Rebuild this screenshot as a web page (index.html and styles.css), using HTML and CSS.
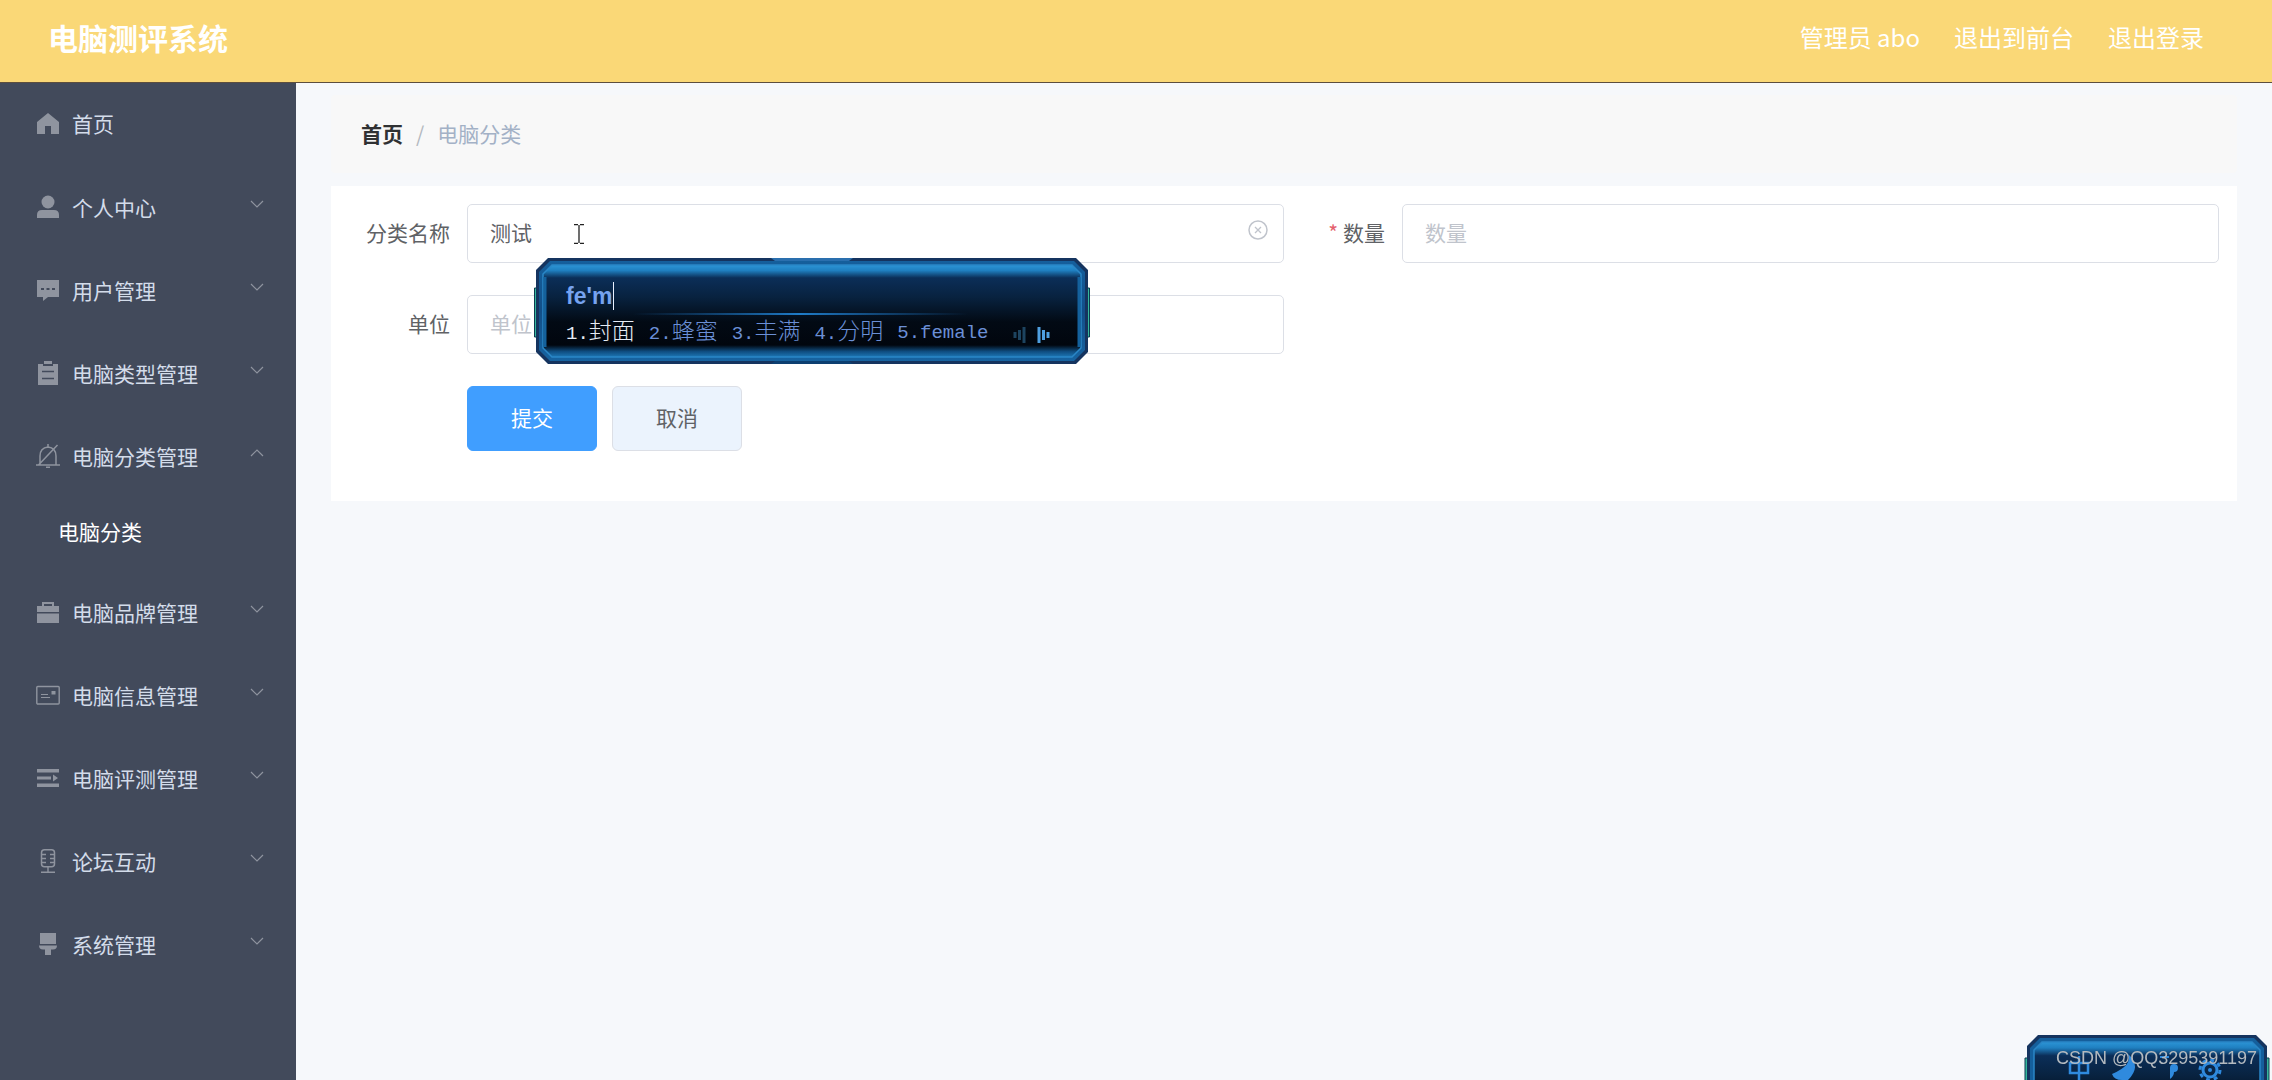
FILE: index.html
```html
<!DOCTYPE html>
<html lang="zh-CN">
<head>
<meta charset="utf-8">
<title>电脑测评系统</title>
<link rel="stylesheet" href="styles.css">
</head>
<body>
<svg class="defs" aria-hidden="true">
  <symbol id="chevron" viewBox="0 0 14 8"><path d="M1 1l6 6 6-6" fill="none" stroke="currentColor" stroke-width="1.2"/></symbol>
</svg>

<header class="topbar">
  <h1 class="brand">电脑测评系统</h1>
  <nav class="account">
    <span>管理员 abo</span>
    <a href="#front">退出到前台</a>
    <a href="#logout">退出登录</a>
  </nav>
</header>

<div class="layout">
  <nav class="sidebar">
    <ul class="menu">
      <li><a class="item home" href="#home">
        <svg class="icon" viewBox="0 0 24 24"><path d="M12 2L1 11v12h8v-8h6v8h8V11z" fill="currentColor"/></svg>
        <span>首页</span></a></li>
      <li><a class="item" href="#me">
        <svg class="icon" viewBox="0 0 24 24"><circle cx="12" cy="7" r="6.5" fill="currentColor"/><path d="M1 23v-3q0-5 5-5h12q5 0 5 5v3z" fill="currentColor"/></svg>
        <span>个人中心</span><svg class="arrow"><use href="#chevron"/></svg></a></li>
      <li><a class="item" href="#users">
        <svg class="icon" viewBox="0 0 24 24"><path d="M1 2h22v17H12l-5 4v-4H1z" fill="currentColor"/><path d="M5 10h3v2H5zM10.500 10h3v2h-3zM16 10h3v2h-3z" fill="#424a5b"/></svg>
        <span>用户管理</span><svg class="arrow"><use href="#chevron"/></svg></a></li>
      <li><a class="item" href="#types">
        <svg class="icon" viewBox="0 0 24 24"><path d="M2 3h5v2h10V3h5v21H2zM8 0h8v3H8z" fill="currentColor"/><path d="M6 10.500h12M6 17.500h12" stroke="#424a5b" stroke-width="1.300"/></svg>
        <span>电脑类型管理</span><svg class="arrow"><use href="#chevron"/></svg></a></li>
      <li>
        <a class="item" href="#categories">
        <svg class="icon" viewBox="0 0 24 24"><path d="M4 21v-9q0-8 8-9 8 1 8 9v9M0 21h24M12 0v3M10 23.300h4M2.500 21L21.500 1" fill="none" stroke="currentColor" stroke-width="1.500"/></svg>
        <span>电脑分类管理</span><svg class="arrow up"><use href="#chevron"/></svg></a>
        <a class="subitem" href="#category-list">电脑分类</a>
      </li>
      <li><a class="item" href="#brands">
        <svg class="icon" viewBox="0 0 24 24"><path d="M1 6h5V2h12v4h5v6H1zM8 4v2h8V4zM1 13.500h22V23H1z" fill="currentColor" fill-rule="evenodd"/></svg>
        <span>电脑品牌管理</span><svg class="arrow"><use href="#chevron"/></svg></a></li>
      <li><a class="item" href="#info">
        <svg class="icon" viewBox="0 0 24 24"><rect x=".8" y="3.500" width="22.400" height="17.500" rx="1" fill="none" stroke="currentColor" stroke-width="1.400"/><path d="M5 11.500h7M5 14.500h9" stroke="currentColor" stroke-width="1.200"/><path d="M15.500 8h4v3.500h-4z" fill="currentColor"/></svg>
        <span>电脑信息管理</span><svg class="arrow"><use href="#chevron"/></svg></a></li>
      <li><a class="item" href="#reviews">
        <svg class="icon" viewBox="0 0 24 24"><path d="M1 3h22v3.500H1zM1 17.500h22V21H1zM1 10.500h14v3H1zM17 8.500l5 3.500-5 3.500z" fill="currentColor"/></svg>
        <span>电脑评测管理</span><svg class="arrow"><use href="#chevron"/></svg></a></li>
      <li><a class="item" href="#forum">
        <svg class="icon" viewBox="0 0 24 24"><rect x="5.500" y=".8" width="13" height="17" rx="3" fill="none" stroke="currentColor" stroke-width="1.500"/><path d="M6 5.500h4M6 9.500h4M6 13.500h4M14 5.500h4M14 9.500h4M14 13.500h4M12 18v5M5 23.200h14" stroke="currentColor" stroke-width="1.400"/></svg>
        <span>论坛互动</span><svg class="arrow"><use href="#chevron"/></svg></a></li>
      <li><a class="item" href="#system">
        <svg class="icon" viewBox="0 0 24 24"><path d="M4 1h16v11H4zM3 13.500h18q0 4-4 4h-2V23H9v-5.500H7q-4 0-4-4z" fill="currentColor"/></svg>
        <span>系统管理</span><svg class="arrow"><use href="#chevron"/></svg></a></li>
    </ul>
  </nav>

  <main class="content">
    <nav class="breadcrumb">
      <a href="#home">首页</a><span class="slash">/</span><span class="current">电脑分类</span>
    </nav>

    <form class="panel">
      <div class="field">
        <label for="name">分类名称</label>
        <div class="control">
          <input id="name" type="text" value="测试">
          <button class="clear" type="button" aria-label="清空">
            <svg viewBox="0 0 20 20"><circle cx="10" cy="10" r="9" fill="none" stroke="currentColor" stroke-width="1.500"/><path d="M7 7l6 6M13 7l-6 6" stroke="currentColor" stroke-width="1.300"/></svg>
          </button>
        </div>
      </div>
      <div class="field">
        <label for="amount" class="required">数量</label>
        <div class="control"><input id="amount" type="text" placeholder="数量"></div>
      </div>
      <div class="field">
        <label for="unit">单位</label>
        <div class="control"><input id="unit" type="text" placeholder="单位"></div>
      </div>
      <div class="actions">
        <button class="btn primary" type="button">提交</button>
        <button class="btn" type="button">取消</button>
      </div>
    </form>
  </main>
</div>

<svg class="pointer" viewBox="0 0 10 20"><path d="M0 .5h4M6 .5h4M0 19.500h4M6 19.500h4M5 1v18" stroke="#222" stroke-width="1.300"/></svg>

<div class="ime">
  <svg class="frame" viewBox="0 0 556 108">
    <defs>
      <linearGradient id="rim" x2="0" y2="1"><stop offset="0" stop-color="#155f9c"/><stop offset=".5" stop-color="#124f88"/><stop offset="1" stop-color="#1763a0"/></linearGradient>
      <linearGradient id="glass" x2="0" y2="1"><stop offset="0" stop-color="#2c95d6"/><stop offset=".06" stop-color="#1f7fc0"/><stop offset=".14" stop-color="#0b2e58"/><stop offset=".35" stop-color="#08223f"/><stop offset=".62" stop-color="#020a14"/><stop offset=".87" stop-color="#01060e"/><stop offset=".94" stop-color="#0f4d80"/><stop offset="1" stop-color="#1d76b4"/></linearGradient>
      <linearGradient id="beam"><stop offset="0" stop-color="#1a6cb8" stop-opacity="0"/><stop offset=".5" stop-color="#1f7cc8"/><stop offset="1" stop-color="#1a6cb8" stop-opacity="0"/></linearGradient>
    </defs>
    <path d="M.5 31h4v49h-4zM551.500 31h4v49h-4z" fill="#35b79c" stroke="#0b3c50"/>
    <path d="M14 1h528l12 12v82l-12 12H14L2 95V13z" fill="#15345f"/>
    <path d="M16 4h524l11 11v78l-11 11H16L5 93V15z" fill="url(#rim)"/>
    <path d="M18 8h520l9 9v74l-9 9H18l-9-9V17z" fill="url(#glass)" stroke="#2a86c6" stroke-width="1.500"/>
    <path d="M11 20v70M545 20v70" stroke="#14619c" stroke-width="3"/>
    <path d="M237 1h82l-4 3h-74z" fill="#2a6fae"/><path d="M237 107h82l-4-3h-74z" fill="#0d3f70"/>
    <rect x="99" y="56" width="335" height="2" fill="url(#beam)"/>
    <path d="M481 75v6M485.500 73v10M490 70v16" stroke="#1d4460" stroke-width="3"/>
    <path d="M505 70v16M509.500 73v10M514 75v6" stroke="#4f9fe0" stroke-width="3"/>
  </svg>
  <div class="typed">fe'm</div>
  <ol class="candidates">
    <li class="first">1.<span>封面</span></li><li>2.<span>蜂蜜</span></li><li>3.<span>丰满</span></li><li>4.<span>分明</span></li><li>5.female</li>
  </ol>
</div>

<div class="imebar">
  <svg class="frame" viewBox="0 0 246 46">
    <path d="M1 24h4v30H1zM241 24h4v30h-4z" fill="#35b79c" stroke="#0b3c50"/>
    <path d="M14 1h218l11 11v50H3V12z" fill="#15345f"/>
    <path d="M16 4h214l10 10v50H6V14z" fill="#155f9c"/>
    <path d="M18 8h210l8 8v90H10V16z" fill="url(#glass)" stroke="#2a86c6" stroke-width="1.500"/>
    <path d="M46 29h18v10H46zM55 22v24" fill="none" stroke="#2f8ade" stroke-width="2.500"/>
    <path d="M104 20Q109 31 88 40Q90 46 98 46H104Q118 32 104 20z" fill="#2f8ade"/>
    <path d="M136 22h9v2h-9zM146 34a4 4 0 1 1 4 4q0 4-4 7" fill="#2f8ade"/>
    <circle cx="186" cy="36" r="7" fill="none" stroke="#2f8ade" stroke-width="3"/><circle cx="186" cy="36" r="10" fill="none" stroke="#2f8ade" stroke-width="3" stroke-dasharray="3.900 3.950"/><circle cx="186" cy="36" r="2" fill="#2f8ade"/>
  </svg>
  <span class="credit">CSDN @QQ3295391197</span>
</div>
</body>
</html>
```

FILE: styles.css
```css
* {
  box-sizing: border-box;
}

body {
  margin: 0;
  min-height: 100vh;
  display: flex;
  flex-direction: column;
  position: relative;
  overflow-x: hidden;
  background: #f6f8fb;
  color: #606266;
  font-family: "Noto Sans CJK SC", "Noto Sans", sans-serif;
  font-size: 21px;
  line-height: 30px;
}

a {
  color: inherit;
  text-decoration: none;
}

ul,
ol {
  margin: 0;
  padding: 0;
  list-style: none;
}

input,
button {
  font: inherit;
}

.defs {
  position: absolute;
  width: 0;
  height: 0;
}

/* Top bar */
.topbar {
  display: flex;
  align-items: center;
  justify-content: space-between;
  height: 83px;
  padding: 0 68px 8px 48px;
  background: #fad877;
  border-bottom: 1px solid #5c4e3e;
  color: #fff;
}

.brand {
  margin: 0;
  font-size: 30px;
  font-weight: 700;
}

.account {
  display: flex;
  gap: 34px;
  font-size: 24px;
}

.layout {
  flex: 1;
  display: flex;
}

/* Side menu */
.sidebar {
  flex: none;
  width: 296px;
  background: #424a5b;
  color: #d3dcea;
}

.item {
  display: flex;
  align-items: center;
  height: 83px;
  padding: 0 32px 6px 36px;
}

.item.home {
  height: 85px;
}

.icon {
  width: 24px;
  height: 24px;
  margin-right: 12px;
  color: #8f949f;
}

.arrow {
  width: 14px;
  height: 8px;
  margin-left: auto;
  margin-bottom: 6px;
  color: #8f949f;
}

.arrow.up {
  transform: rotate(180deg);
}

.subitem {
  display: block;
  height: 73px;
  padding: 16px 0 0 58px;
  color: #fff;
}

/* Content */
.content {
  flex: 1;
  min-width: 0;
  padding: 12px 35px;
}

.breadcrumb {
  display: flex;
  align-items: center;
  height: 78px;
  margin-bottom: 13px;
  padding: 0 30px 2px;
  background: #f8f8f8;
  border-radius: 4px;
}

.breadcrumb a {
  color: #303133;
  font-weight: 700;
}

.slash {
  margin: 0 13px;
  color: #b4b8c0;
}

.current {
  color: #a3b1c6;
}

.panel {
  display: grid;
  grid-template-columns: 1fr 1fr;
  row-gap: 32px;
  padding: 18px 18px 50px;
  background: #fff;
}

.field {
  display: flex;
  align-items: center;
}

.field label {
  flex: none;
  width: 118px;
  padding: 0 17px 3px 0;
  text-align: right;
}

.required::before {
  content: "*";
  margin-right: 5px;
  color: #e4606d;
}

.control {
  flex: 1;
  position: relative;
}

.control input {
  display: block;
  width: 100%;
  height: 59px;
  padding: 0 22px 4px;
  border: 1px solid #dcdfe6;
  border-radius: 5px;
  background: #fff;
  color: #606266;
  outline: none;
}

.control input::placeholder {
  color: #c0c4cc;
  opacity: 1;
}

.clear {
  position: absolute;
  top: 16px;
  right: 16px;
  width: 20px;
  height: 20px;
  padding: 0;
  border: 0;
  background: none;
  color: #c0c4cc;
}

.clear svg {
  display: block;
}

.actions {
  grid-column: 1 / -1;
  display: flex;
  gap: 15px;
  padding-left: 118px;
}

.btn {
  width: 130px;
  height: 65px;
  padding: 0 0 3px;
  border: 1px solid #dcdfe6;
  border-radius: 6px;
  background: #ebf3fd;
  color: #606266;
}

.btn.primary {
  border-color: #409eff;
  background: #409eff;
  color: #fff;
}

/* Mouse pointer and input method windows float above the page */
.pointer {
  position: absolute;
  left: 574px;
  top: 224px;
  width: 10px;
  height: 20px;
}

.ime {
  position: absolute;
  left: 534px;
  top: 257px;
  width: 556px;
  height: 108px;
  padding: 25px 32px;
}

.frame {
  position: absolute;
  left: 0;
  top: 0;
  width: 100%;
  height: 100%;
}

.typed {
  position: relative;
  width: fit-content;
  height: 28px;
  padding-right: 1px;
  border-right: 1px solid #e8f0ff;
  color: #76a3f0;
  font-family: "Liberation Sans", sans-serif;
  font-size: 23px;
  font-weight: 700;
  line-height: 28px;
}

.candidates {
  position: relative;
  display: flex;
  gap: 14px;
  margin-top: 8px;
  color: #6b8fd6;
  font-family: "Liberation Mono", "Noto Sans CJK SC", monospace;
  font-size: 19px;
  font-weight: 300;
  white-space: nowrap;
}

.candidates span {
  font-size: 23px;
}

.candidates .first {
  color: #e6ecf5;
}

.imebar {
  position: fixed;
  right: 2px;
  bottom: 0;
  width: 246px;
  height: 46px;
  padding: 9px 0 0 32px;
  overflow: hidden;
}

.credit {
  display: block;
  position: relative;
  color: #b4babf;
  font-family: "Liberation Sans", sans-serif;
  font-size: 18px;
  line-height: 30px;
}
```
